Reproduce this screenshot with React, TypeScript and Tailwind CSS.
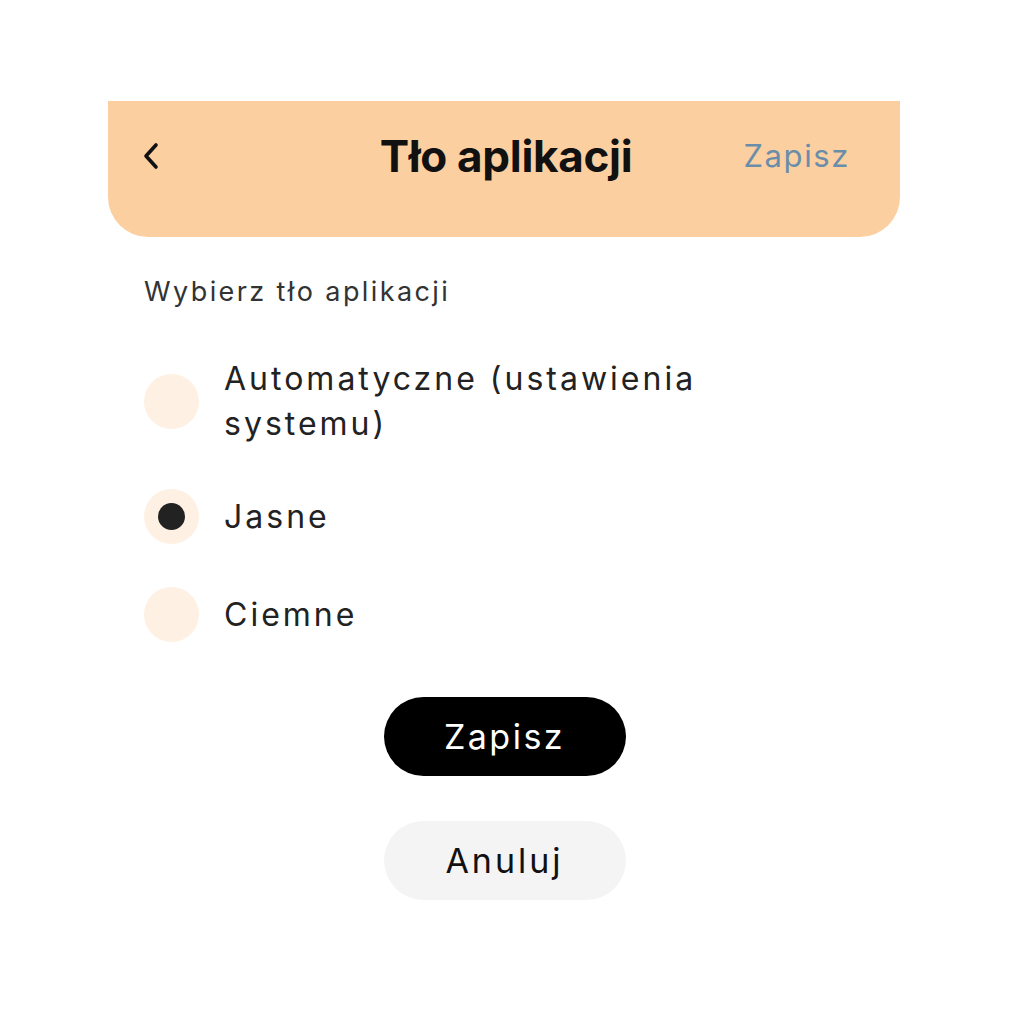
import React from "react";

function Radio({ checked }: { checked?: boolean }) {
  return (
    <div className="w-[55px] h-[55px] rounded-full bg-[#fef1e4] flex items-center justify-center shrink-0">
      {checked && <div className="w-[27px] h-[27px] rounded-full bg-[#222222]" />}
    </div>
  );
}

export default function App() {
  return (
    <div className="w-[1009px] h-[1024px] bg-white pt-[101px] px-[108px] text-[#222]" style={{ fontFamily: "Inter, 'Noto Sans', sans-serif" }}>
      <div className="w-[792px] h-[136px] bg-[#fccfa0] rounded-b-[40px] grid grid-cols-[1fr_auto_1fr] items-start pt-[30px] px-[33px]">
        <div className="h-[50px] flex items-center">
          <svg width="20" height="30" viewBox="0 0 20 30" fill="none">
            <path d="M15 4 L5 15 L15 26" stroke="#111" strokeWidth="3.6" strokeLinecap="round" strokeLinejoin="round" />
          </svg>
        </div>
        <div className="text-center text-[44px] font-bold text-[#111] leading-[50px] tracking-[-0.3px] pl-[4px]">Tło aplikacji</div>
        <div className="text-right text-[31px] text-[#6a8eaa] leading-[50px] pr-[17px] tracking-[1.6px]">Zapisz</div>
      </div>

      <div className="pl-[36px] pt-[37px]">
        <div className="text-[27px] text-[#333] leading-[36px] tracking-[2.4px]">Wybierz tło aplikacji</div>
        <div className="flex flex-col gap-[43px] mt-[46px]">
          <label className="flex items-center gap-[25px]">
            <Radio />
            <span className="text-[32px] leading-[45px] w-[520px] tracking-[3px]">Automatyczne (ustawienia systemu)</span>
          </label>
          <label className="flex items-center gap-[25px]">
            <Radio checked />
            <span className="text-[32px] leading-[45px] tracking-[3px]">Jasne</span>
          </label>
          <label className="flex items-center gap-[25px]">
            <Radio />
            <span className="text-[32px] leading-[45px] tracking-[3px]">Ciemne</span>
          </label>
        </div>
      </div>

      <div className="flex flex-col items-center mt-[55px] gap-[45px]">
        <button className="w-[242px] h-[79px] rounded-full bg-black text-white text-[34px] tracking-[2.5px]">Zapisz</button>
        <button className="w-[242px] h-[79px] rounded-full bg-[#f4f4f4] text-[#111] text-[34px] tracking-[3px]">Anuluj</button>
      </div>
    </div>
  );
}
